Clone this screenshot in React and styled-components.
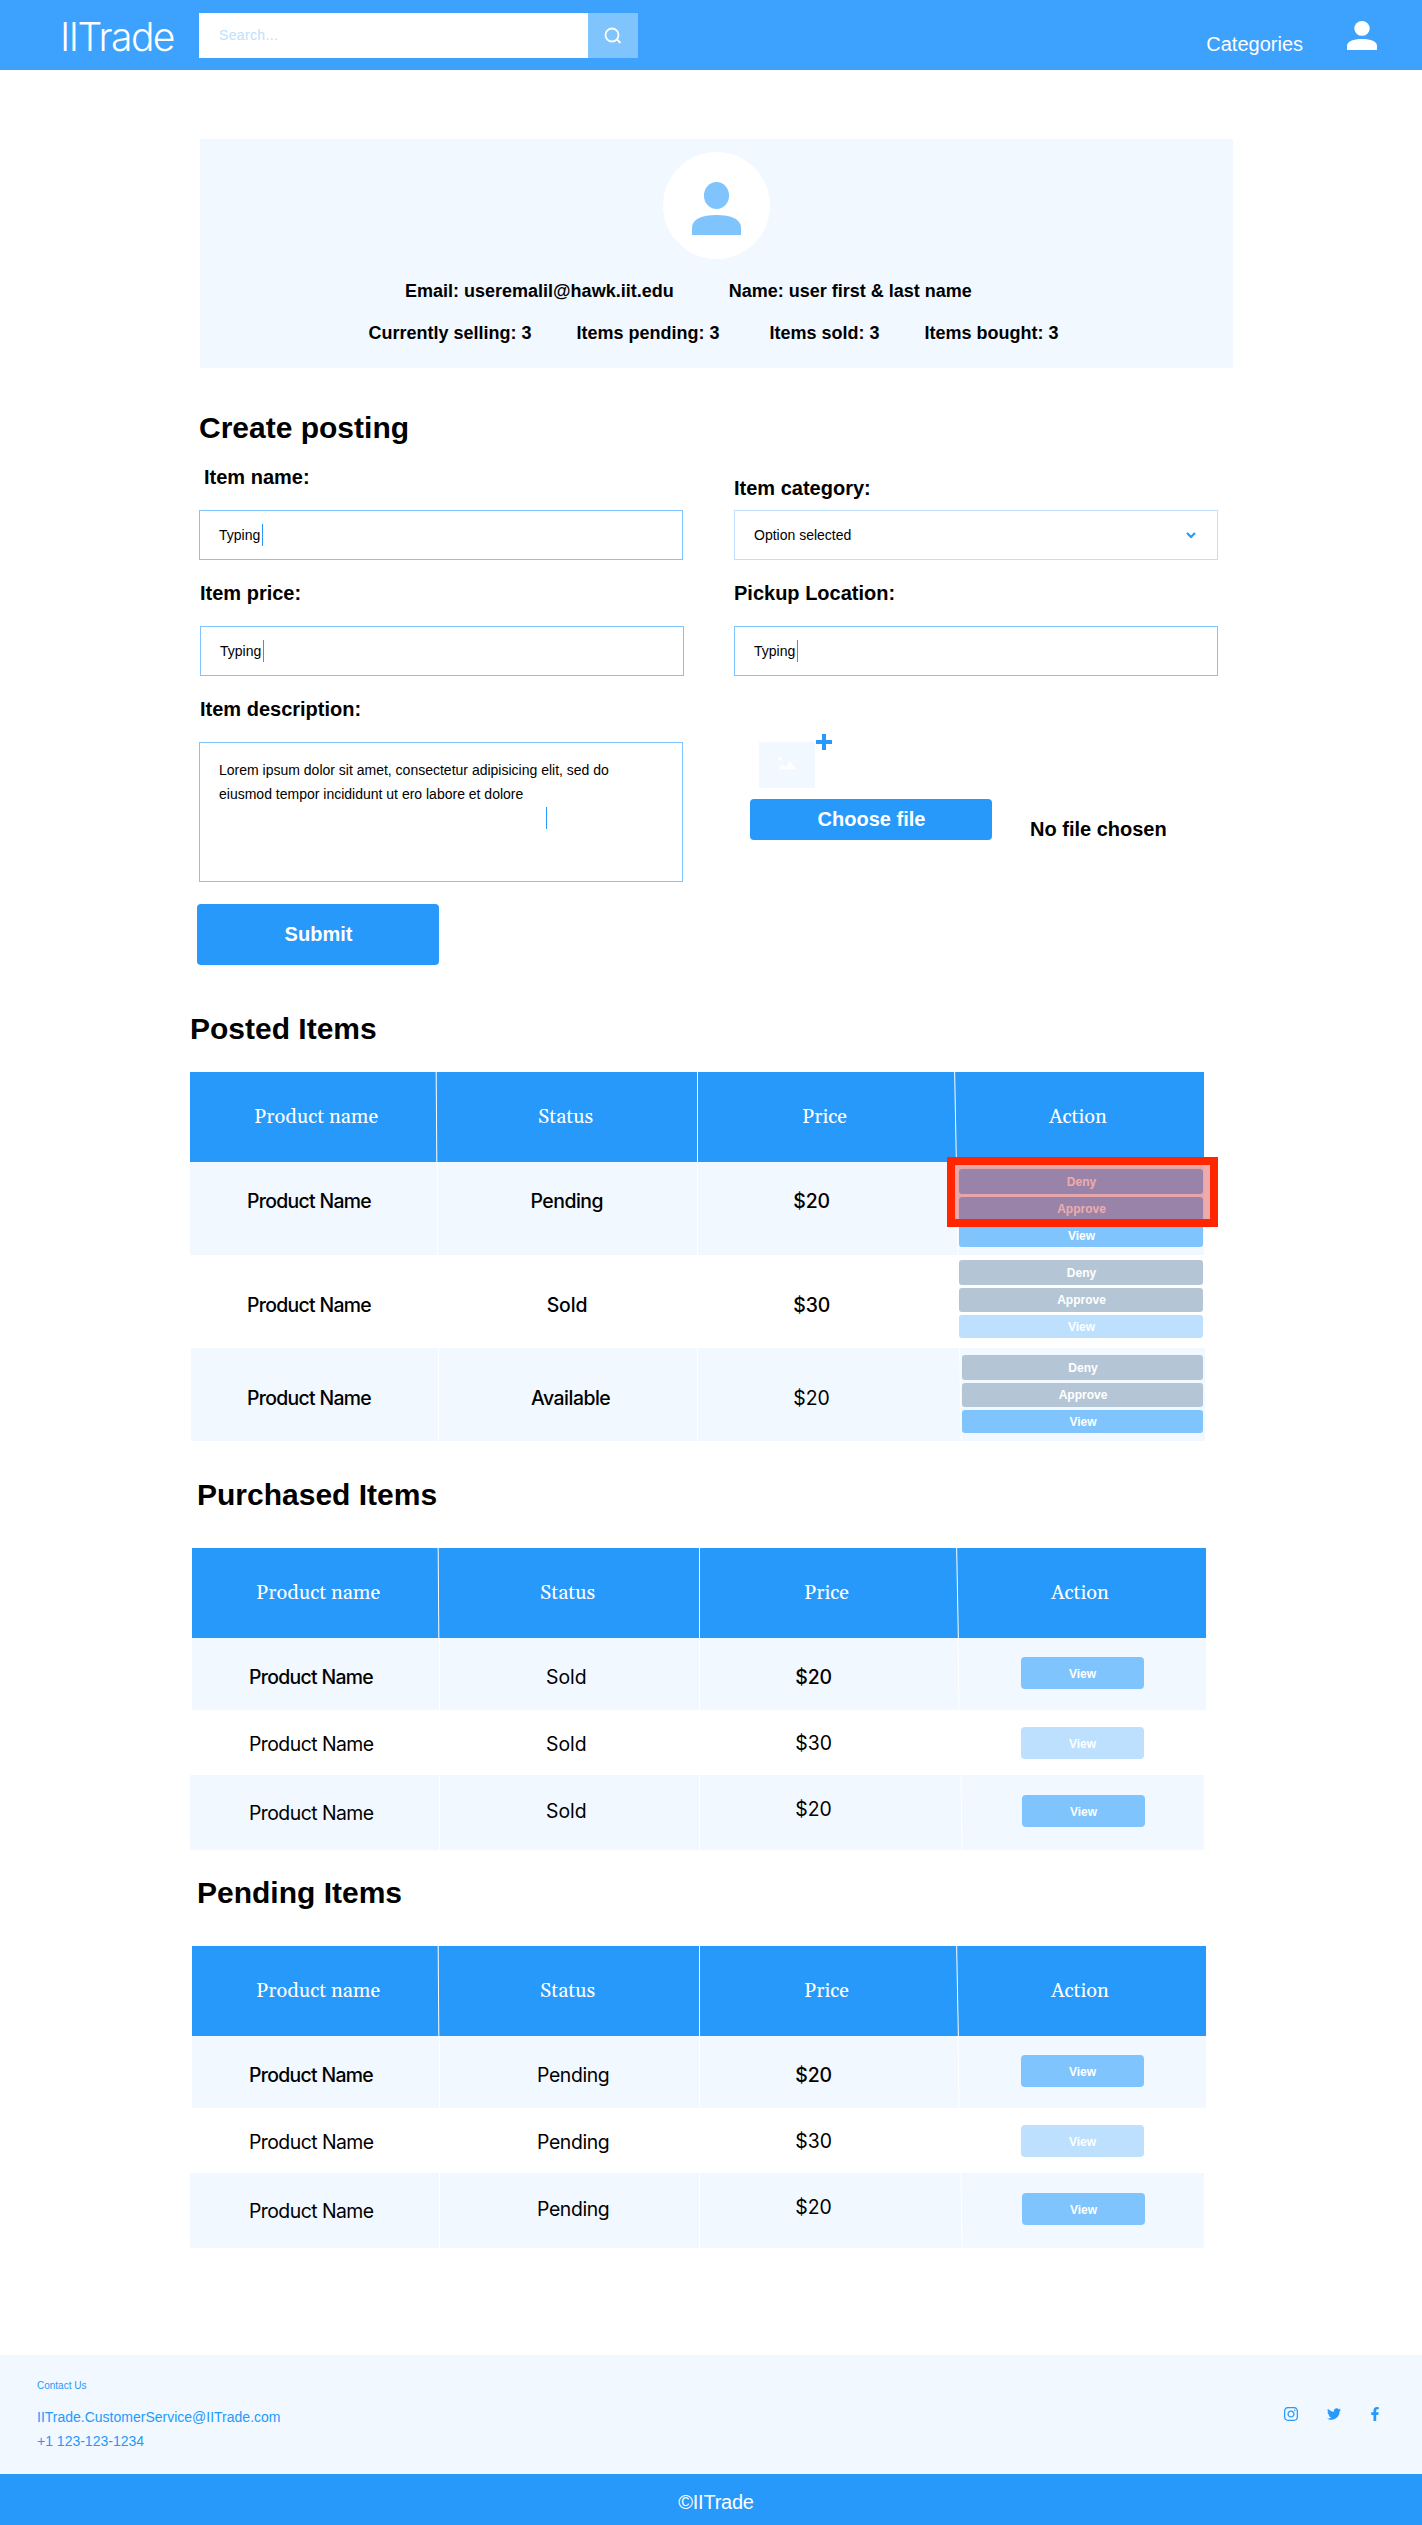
import React from "react";
import styled, { createGlobalStyle, css } from "styled-components";
import { FaInstagram, FaTwitter, FaFacebookF } from "react-icons/fa";

const color = {
  header: "#3da1fe",
  primary: "#2699fb",
  mid: "#7fc4fd",
  soft: "#bce0fd",
  pale: "#f1f8ff",
  muted: "#b4c6d6",
};

const GlobalStyle = createGlobalStyle`
  *, *::before, *::after { box-sizing: border-box; }
  body {
    margin: 0;
    background: #fff;
    color: #000;
    font-family: "Liberation Sans", Arial, sans-serif;
  }
`;

const Page = styled.div`
  width: 1422px;
  min-height: 2525px;
  display: flex;
  flex-direction: column;
`;

/* Header */
const Header = styled.header`
  height: 70px;
  display: flex;
  align-items: flex-start;
  background: ${color.header};
  padding: 0 45px 0 60px;
`;

const Logo = styled.div`
  width: 139px;
  margin-top: 17px;
  color: #fff;
  font: 350 39px/40px Inter, sans-serif;
  letter-spacing: -1.52px;
`;

const SearchForm = styled.div`
  display: flex;
  width: 439px;
  height: 45px;
  margin-top: 13px;
`;

const SearchInput = styled.div`
  flex: 1;
  padding-left: 20px;
  background: #fff;
  color: ${color.soft};
  font-size: 14px;
  line-height: 45px;
  letter-spacing: 0.36px;
`;

const SearchButton = styled.button`
  width: 50px;
  padding: 0;
  border: 0;
  display: flex;
  align-items: center;
  justify-content: center;
  background: ${color.mid};
`;

const NavLink = styled.a`
  margin: 32px 44px 0 auto;
  color: #fff;
  font-size: 20px;
  line-height: 24px;
`;

const HeaderUser = styled.div`
  margin-top: 21px;
  display: flex;
`;

/* Profile */
const Profile = styled.section`
  width: 1033px;
  height: 229px;
  margin: 69px 0 0 200px;
  padding-top: 13px;
  background: ${color.pale};
`;

const Avatar = styled.div`
  width: 107px;
  height: 107px;
  margin: 0 auto 22px;
  padding-top: 6px;
  border-radius: 50%;
  display: flex;
  align-items: center;
  justify-content: center;
  background: #fff;
`;

const InfoRow = styled.div`
  display: flex;
  padding-left: ${(p) => p.$start}px;
  margin-bottom: 22px;
`;

const Info = styled.span`
  margin-right: ${(p) => p.$gap || 0}px;
  font-size: 18px;
  font-weight: bold;
  line-height: 20px;
  white-space: nowrap;
`;

/* Posting form */
const Title = styled.h2`
  margin: ${(p) => p.$top}px 0 ${(p) => p.$bottom}px ${(p) => p.$left}px;
  font-size: 30px;
  font-weight: bold;
  line-height: 36px;
`;

const Form = styled.div`
  display: grid;
  grid-template-columns: 485px 484px;
  column-gap: 50px;
  margin-left: 199px;
`;

const Column = styled.div`
  display: flex;
  flex-direction: column;
  align-items: flex-start;
`;

const Label = styled.label`
  margin: ${(p) => p.$top ?? 21}px 0 ${(p) => p.$bottom ?? 21}px ${(p) => p.$left ?? 0}px;
  font-size: 20px;
  font-weight: bold;
  line-height: 24px;
  white-space: nowrap;
`;

const Input = styled.div`
  width: 484px;
  height: 50px;
  margin-left: ${(p) => p.$shift || 0}px;
  padding: 0 21px 0 19px;
  border: 1px solid ${(p) => (p.$soft ? color.soft : color.mid)};
  display: flex;
  align-items: center;
  justify-content: ${(p) => (p.$soft ? "space-between" : "flex-start")};
  font-size: 14px;
`;

const Caret = styled.span`
  width: 1px;
  height: 22px;
  margin-left: 2px;
  background: ${color.primary};
`;

const TextArea = styled.div`
  width: 484px;
  height: 140px;
  padding: 15px 19px 0;
  border: 1px solid ${color.mid};
  font-size: 14px;
  line-height: 24px;
  white-space: pre-line;
`;

const LineCaret = styled.div`
  width: 1px;
  height: 22px;
  margin: 1px 0 0 327px;
  background: ${color.primary};
`;

const FormButton = styled.button`
  width: 242px;
  height: ${(p) => p.$height}px;
  padding: 0 0 2px 1px;
  border: 0;
  border-radius: 4px;
  background: ${color.primary};
  color: #fff;
  font: bold 20px/24px "Liberation Sans", Arial, sans-serif;
`;

const SubmitRow = styled.div`
  margin: 22px 0 0 -2px;
`;

const Upload = styled.div`
  display: flex;
  margin: 66px 0 11px 25px;
`;

const Thumb = styled.div`
  width: 56px;
  height: 46px;
  padding-bottom: 4px;
  display: flex;
  align-items: center;
  justify-content: center;
  background: ${color.pale};
`;

const PlusMark = styled.span`
  display: flex;
  margin: -8px 0 0 1px;
`;

const FileRow = styled.div`
  display: flex;
  align-items: flex-start;
  margin-left: 16px;
`;

/* Tables */
const Table = styled.section`
  width: 1014px;
  margin-left: ${(p) => p.$left}px;
`;

const Row = styled.div`
  display: grid;
  grid-template-columns: ${(p) => p.$c1}px 1px ${(p) => p.$c2}px 1px ${(p) => p.$c3}px 1px 1fr;
  height: ${(p) => p.$height}px;
  margin-left: ${(p) => p.$shift || 0}px;
  margin-right: ${(p) => -(p.$shift || 0)}px;
  background: ${(p) => p.$bg};
`;

const Divider = styled.span`
  background: #fff;
  transform: skewX(${(p) => p.$skew || 0}deg);
`;

const HeadCell = styled.div`
  padding-left: ${(p) => p.$left}px;
  color: #fff;
  font: 20px/90px Gelasio, "Liberation Serif", serif;
  white-space: nowrap;
`;

const Cell = styled.div`
  padding: ${(p) => p.$top}px 0 0 ${(p) => p.$left}px;
  font: ${(p) => (p.$heavy ? 500 : 400)} 19.4px/24px Inter, sans-serif;
  letter-spacing: ${(p) => p.$track}px;
  white-space: nowrap;
`;

const Actions = styled.div`
  position: relative;
  display: flex;
  flex-direction: column;
  gap: 3px;
  padding: ${(p) => p.$top}px 0 0 ${(p) => p.$left}px;
`;

const tones = { blue: color.mid, soft: color.soft, muted: color.muted };

const ActionButton = styled.button`
  width: ${(p) => p.$width}px;
  height: ${(p) => p.$height}px;
  padding: 0 0 0 1px;
  border: 0;
  border-radius: ${(p) => (p.$height > 30 ? 4 : 3)}px;
  background: ${(p) => tones[p.$tone]};
  color: #fff;
  font: bold 12px/14px "Liberation Sans", Arial, sans-serif;
  ${(p) => p.$height > 30 && css`padding: 1px 0 0;`}
`;

const Highlight = styled.div`
  position: absolute;
  top: -5px;
  left: -11px;
  width: 271px;
  height: 70px;
  border: 8px solid #ff2600;
  background: rgba(205, 0, 0, 0.33);
  background-clip: padding-box;
`;

/* Footer */
const Footer = styled.footer`
  height: 119px;
  margin-top: 107px;
  padding: 25px 40px 0 37px;
  display: flex;
  justify-content: space-between;
  background: ${color.pale};
  color: ${color.primary};
`;

const ContactTitle = styled.div`
  margin-bottom: 13px;
  font-size: 10px;
  line-height: 12px;
`;

const ContactLine = styled.div`
  font-size: 14px;
  line-height: 24px;
`;

const Social = styled.div`
  display: flex;
  align-items: center;
  height: 14px;
  margin-top: 27px;
`;

const SocialLink = styled.a`
  display: flex;
  margin-right: ${(p) => p.$gap || 0}px;
`;

const Copyright = styled.div`
  height: 51px;
  padding: 5px 0 0 10px;
  background: ${color.primary};
  color: #fff;
  font-size: 20px;
  line-height: 46px;
  letter-spacing: -0.25px;
  text-align: center;
`;

const UserIcon = ({ width, height, fill }) => (
  <svg width={width} height={height} viewBox="0 0 30 29" preserveAspectRatio="none" fill={fill}>
    <ellipse cx="15" cy="7.4" rx="7.7" ry="7.4" />
    <path d="M0 29v-4.2C0 20.500 6 18 15 18s15 2.500 15 6.800V29z" />
  </svg>
);

const SearchIcon = () => (
  <svg width="18" height="18" viewBox="0 0 18 18" fill="none" stroke="#fff" strokeWidth="1.8">
    <circle cx="8" cy="8" r="6.500" />
    <path d="M12.700 12.200l3.800 3.800" />
  </svg>
);

const ImageIcon = () => (
  <svg width="20" height="14" viewBox="0 0 20 14" fill="#fff">
    <circle cx="2.800" cy="2.600" r="1.900" />
    <path d="M1 13.500l4.500-5.500 2.700 3.200L13 5l6 8.500z" />
  </svg>
);

const PlusIcon = () => (
  <svg width="16" height="16" viewBox="0 0 16 16" fill={color.primary}>
    <path d="M6 0h4v6h6v4h-6v6H6v-6H0V6h6z" />
  </svg>
);

const ChevronIcon = () => (
  <svg width="10" height="7" viewBox="0 0 10 7" fill="none" stroke={color.primary} strokeWidth="2.2">
    <path d="M1 1l4 4 4-4" />
  </svg>
);

/* Letter spacing for each status word */
const tracking = { Pending: -0.37, Sold: 0, Available: -0.35 };

const postedRows = [
  {
    status: "Pending", statusLeft: 92.5, price: "$20", height: 93, top: 27, c1: 247, c2: 259, c3: 259, skew: 0.6,
    actionTop: 7, actionLeft: 1, width: 244, tones: ["blue", "blue", "blue"], highlighted: true, heavyPrice: true,
  },
  {
    status: "Sold", statusLeft: 108.7, price: "$30", height: 93, top: 38, c1: 247, c2: 259, c3: 259, skew: 0,
    actionTop: 5, actionLeft: 1, width: 244, tones: ["muted", "muted", "soft"], heavyPrice: true,
  },
  {
    status: "Available", statusLeft: 92, price: "$20", height: 93, top: 38, shift: 1, c1: 247, c2: 258, c3: 262, skew: 1,
    actionTop: 7, actionLeft: 1, width: 241, tones: ["muted", "muted", "blue"], heavyPrice: false,
  },
];

const orderRows = [
  { price: "$20", height: 72, tops: [27, 27, 27], c1: 247, c2: 259, c3: 258, skew: 0.8, actionTop: 19, actionLeft: 62, tone: "blue", heavy: true },
  { price: "$30", height: 65, tops: [22, 22, 21], c1: 247, c2: 259, c3: 258, skew: 0, actionTop: 17, actionLeft: 62, tone: "soft" },
  { price: "$20", height: 75, tops: [26, 24, 22], shift: -2, c1: 249, c2: 259, c3: 261, skew: 0.8, actionTop: 20, actionLeft: 60, tone: "blue" },
];

const actionLabels = [["Deny", 25], ["Approve", 24], ["View", 23]];

const TableHead = () => (
  <Row $height={90} $bg={color.primary} $c1={246} $c2={260} $c3={257}>
    <HeadCell $left={64}>Product name</HeadCell>
    <Divider $skew={0.4} />
    <HeadCell $left={101}>Status</HeadCell>
    <Divider />
    <HeadCell $left={104}>Price</HeadCell>
    <Divider $skew={1.1} />
    <HeadCell $left={93}>Action</HeadCell>
  </Row>
);

const PostedTable = () => (
  <Table $left={190}>
    <TableHead />
    {postedRows.map((r, i) => (
      <Row key={i} $height={r.height} $shift={r.shift} $bg={i % 2 ? "#fff" : color.pale} $c1={r.c1} $c2={r.c2} $c3={r.c3}>
        <Cell $top={r.top} $left={57 - (r.shift || 0)} $heavy $track={-0.68}>Product Name</Cell>
        <Divider />
        <Cell $top={r.top} $left={r.statusLeft} $heavy $track={tracking[r.status] - 0.12}>{r.status}</Cell>
        <Divider />
        <Cell $top={r.top} $left={95.3} $heavy={r.heavyPrice} $track={r.heavyPrice ? -0.1 : 0}>{r.price}</Cell>
        <Divider $skew={r.skew} />
        <Actions $top={r.actionTop} $left={r.actionLeft}>
          {actionLabels.map(([name, height], k) => (
            <ActionButton key={name} $width={r.width} $height={height} $tone={r.tones[k]}>{name}</ActionButton>
          ))}
          {r.highlighted && <Highlight />}
        </Actions>
      </Row>
    ))}
  </Table>
);

const OrderTable = ({ status, statusLeft }) => (
  <Table $left={192}>
    <TableHead />
    {orderRows.map((r, i) => (
      <Row key={i} $height={r.height} $shift={r.shift} $bg={i % 2 ? "#fff" : color.pale} $c1={r.c1} $c2={r.c2} $c3={r.c3}>
        <Cell $top={r.tops[0]} $left={57 - (r.shift || 0)} $heavy={r.heavy} $track={r.heavy ? -0.68 : -0.54}>Product Name</Cell>
        <Divider />
        <Cell $top={r.tops[1]} $left={statusLeft} $track={tracking[status]}>{status}</Cell>
        <Divider />
        <Cell $top={r.tops[2]} $left={95.3} $heavy={r.heavy} $track={r.heavy ? -0.1 : 0}>{r.price}</Cell>
        <Divider $skew={r.skew} />
        <Actions $top={r.actionTop} $left={r.actionLeft}>
          <ActionButton $width={123} $height={32} $tone={r.tone}>View</ActionButton>
        </Actions>
      </Row>
    ))}
  </Table>
);

export default function App() {
  return (
    <Page>
      <GlobalStyle />
      <Header>
        <Logo>IITrade</Logo>
        <SearchForm>
          <SearchInput>Search...</SearchInput>
          <SearchButton aria-label="Search"><SearchIcon /></SearchButton>
        </SearchForm>
        <NavLink>Categories</NavLink>
        <HeaderUser><UserIcon width={30} height={29} fill="#fff" /></HeaderUser>
      </Header>

      <Profile>
        <Avatar><UserIcon width={49} height={53} fill={color.mid} /></Avatar>
        <InfoRow $start={205}>
          <Info $gap={55}>Email: useremalil@hawk.iit.edu</Info>
          <Info>Name: user first &amp; last name</Info>
        </InfoRow>
        <InfoRow $start={168.5}>
          <Info $gap={45}>Currently selling: 3</Info>
          <Info $gap={50}>Items pending: 3</Info>
          <Info $gap={45}>Items sold: 3</Info>
          <Info>Items bought: 3</Info>
        </InfoRow>
      </Profile>

      <Title $top={42} $bottom={0} $left={199}>Create posting</Title>
      <Form>
        <Column>
          <Label $top={19} $bottom={21} $left={5}>Item name:</Label>
          <Input>Typing<Caret /></Input>
          <Label $left={1}>Item price:</Label>
          <Input $shift={1}>Typing<Caret /></Input>
          <Label $left={1}>Item description:</Label>
          <TextArea>
            {"Lorem ipsum dolor sit amet, consectetur adipisicing elit, sed do\neiusmod tempor incididunt ut ero labore et dolore"}
            <LineCaret />
          </TextArea>
          <SubmitRow><FormButton $height={61}>Submit</FormButton></SubmitRow>
        </Column>
        <Column>
          <Label $top={30} $bottom={10}>Item category:</Label>
          <Input $soft>Option selected<ChevronIcon /></Input>
          <Label>Pickup Location:</Label>
          <Input>Typing<Caret /></Input>
          <Upload>
            <Thumb><ImageIcon /></Thumb>
            <PlusMark><PlusIcon /></PlusMark>
          </Upload>
          <FileRow>
            <FormButton $height={41}>Choose file</FormButton>
            <Label as="span" $top={18} $bottom={0} $left={38}>No file chosen</Label>
          </FileRow>
        </Column>
      </Form>

      <Title $top={46} $bottom={25} $left={190}>Posted Items</Title>
      <PostedTable />
      <Title $top={36} $bottom={35} $left={197}>Purchased Items</Title>
      <OrderTable status="Sold" statusLeft={106} />
      <Title $top={25} $bottom={35} $left={197}>Pending Items</Title>
      <OrderTable status="Pending" statusLeft={97} />

      <Footer>
        <div>
          <ContactTitle>Contact Us</ContactTitle>
          <ContactLine>IITrade.CustomerService@IITrade.com</ContactLine>
          <ContactLine>+1 123-123-1234</ContactLine>
        </div>
        <Social>
          <SocialLink $gap={28}><FaInstagram size={16} /></SocialLink>
          <SocialLink $gap={27}><FaTwitter size={14} /></SocialLink>
          <SocialLink><FaFacebookF size={14} /></SocialLink>
        </Social>
      </Footer>
      <Copyright>©IITrade</Copyright>
    </Page>
  );
}
